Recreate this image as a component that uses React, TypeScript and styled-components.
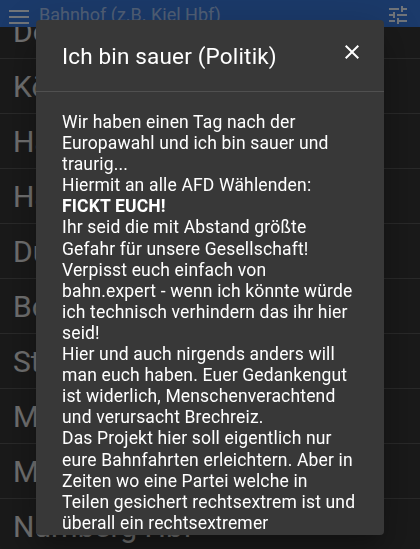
import styled, { createGlobalStyle } from "styled-components";

const stations = [
  "Dortmund Hbf",
  "Köln Hbf",
  "Hamburg Hbf",
  "Hannover Hbf",
  "Düsseldorf Hbf",
  "Bochum Hbf",
  "Stuttgart Hbf",
  "München Hbf",
  "Mannheim Hbf",
  "Nürnberg Hbf",
];

const paragraphs = [
  "Wir haben einen Tag nach der Europawahl und ich bin sauer und traurig...",
  "Hiermit an alle AFD Wählenden:",
  "Ihr seid die mit Abstand größte Gefahr für unsere Gesellschaft!",
  "Verpisst euch einfach von bahn.expert - wenn ich könnte würde ich technisch verhindern das ihr hier seid!",
  "Hier und auch nirgends anders will man euch haben. Euer Gedankengut ist widerlich, Menschenverachtend und verursacht Brechreiz.",
  "Das Projekt hier soll eigentlich nur eure Bahnfahrten erleichtern. Aber in Zeiten wo eine Partei welche in Teilen gesichert rechtsextrem ist und überall ein rechtsextremer Rechtsruck zu spüren ist, kann ich nicht einfach still sein.",
];

export default function App() {
  return (
    <>
      <GlobalStyle />
      <Page>
        <Header>
          <HeaderIcon width="20" height="14" viewBox="0 0 20 14">
            <rect x="0" y="0" width="20" height="2" />
            <rect x="0" y="6" width="20" height="2" />
            <rect x="0" y="12" width="20" height="2" />
          </HeaderIcon>
          <SearchText>Bahnhof (z.B. Kiel Hbf)</SearchText>
          <HeaderIcon width="24" height="24" viewBox="0 0 24 24">
            <path d="M3 17v2h6v-2H3zM3 5v2h10V5H3zm10 16v-2h8v-2h-8v-2h-2v6h2zM7 9v2H3v2h4v2h2V9H7zm14 4v-2H11v2h10zm-6-4h2V7h4V5h-4V3h-2v6z" />
          </HeaderIcon>
        </Header>
        <StationList>
          {stations.map((name) => (
            <StationRow key={name}>{name}</StationRow>
          ))}
        </StationList>
      </Page>
      <Backdrop />
      <Dialog role="dialog">
        <DialogTitle>
          <h2>Ich bin sauer (Politik)</h2>
          <CloseButton aria-label="close">
            <svg width="24" height="24" viewBox="0 0 24 24">
              <path d="M19 6.41 17.59 5 12 10.59 6.41 5 5 6.41 10.59 12 5 17.59 6.41 19 12 13.41 17.59 19 19 17.59 13.41 12z" />
            </svg>
          </CloseButton>
        </DialogTitle>
        <DialogContent>
          {paragraphs[0]}
          <br />
          {paragraphs[1]}
          <br />
          <strong>FICKT EUCH!</strong>
          <br />
          {paragraphs[2]}
          <br />
          {paragraphs[3]}
          <br />
          {paragraphs[4]}
          <br />
          {paragraphs[5]}
        </DialogContent>
      </Dialog>
    </>
  );
}

const GlobalStyle = createGlobalStyle`
  html, body {
    margin: 0;
    padding: 0;
    background: #343434;
    font-family: Roboto, "Noto Sans", sans-serif;
    overflow: hidden;
  }
`;

const Page = styled.div`
  display: flex;
  flex-direction: column;
  height: 549px;
  overflow: hidden;
  background: #343434;
`;

const Header = styled.header`
  position: relative;
  z-index: 1;
  height: 46px;
  box-sizing: border-box;
  padding: 3px 10px 0 9px;
  display: flex;
  align-items: flex-start;
  gap: 10px;
  background: #3674d4;
  color: #f4f6fa;
`;

const HeaderIcon = styled.svg`
  flex: none;
  fill: #f2f4f8;
  opacity: 0.92;

  &:first-child {
    margin-top: 7px;
  }
`;

const SearchText = styled.span`
  flex: 1;
  font-size: 18px;
  line-height: 24px;
  color: rgba(255, 255, 255, 0.55);
  white-space: nowrap;
`;

const StationList = styled.ul`
  list-style: none;
  margin: -23px 0 0;
  padding: 0;
`;

const StationRow = styled.li`
  height: 54px;
  border-bottom: 1px solid #545454;
  padding-left: 13px;
  display: flex;
  align-items: center;
  font-size: 30px;
  color: #e2e2e2;
  white-space: nowrap;
`;

const Backdrop = styled.div`
  position: fixed;
  inset: 0;
  background: rgba(0, 0, 0, 0.5);
  z-index: 10;
`;

const Dialog = styled.div`
  position: fixed;
  z-index: 11;
  top: 20px;
  left: 36px;
  width: 348px;
  height: 515px;
  display: flex;
  flex-direction: column;
  background: #383838;
  color: #fff;
  border-radius: 4px;
  overflow: hidden;
  box-shadow: 0 11px 15px -7px rgba(0, 0, 0, 0.2),
    0 24px 38px 3px rgba(0, 0, 0, 0.14), 0 9px 46px 8px rgba(0, 0, 0, 0.12);
`;

const DialogTitle = styled.div`
  flex: none;
  display: flex;
  align-items: center;
  justify-content: space-between;
  padding: 20px 12px 19px 26px;
  border-bottom: 1px solid rgba(255, 255, 255, 0.12);

  & h2 {
    margin: 0;
    font-size: 22.5px;
    font-weight: 400;
    line-height: 32px;
    letter-spacing: 0.0075em;
  }
`;

const CloseButton = styled.button`
  width: 40px;
  height: 40px;
  margin-top: -8px;
  padding: 8px;
  border: none;
  background: transparent;
  display: flex;
  align-items: center;
  justify-content: center;

  & svg {
    fill: #fff;
  }
`;

const DialogContent = styled.div`
  flex: 1;
  overflow: hidden;
  padding: 20px 26px 16px 26px;
  font-size: 17.5px;
  line-height: 21.1px;
  letter-spacing: 0.00938em;

  & strong {
    font-weight: 700;
  }
`;
